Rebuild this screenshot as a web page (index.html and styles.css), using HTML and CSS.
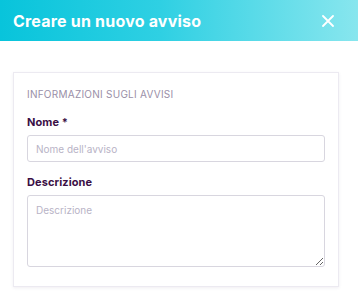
FILE: index.html
```html
<!DOCTYPE html>
<html>
<head>
<meta charset="utf-8">
<link rel="stylesheet" href="styles.css">
</head>
<body>
<div class="modal">
  <header class="modal-header">
    <h1 class="modal-title">Creare un nuovo avviso</h1>
    <button class="close-btn" aria-label="Chiudi">
      <svg width="12" height="12" viewBox="0 0 12 12"><path d="M1 1L11 11M11 1L1 11" stroke="#fff" stroke-width="1.8" stroke-linecap="round"/></svg>
    </button>
  </header>
  <div class="modal-body">
    <section class="card">
      <div class="section-title">INFORMAZIONI SUGLI AVVISI</div>
      <label class="field-label" for="nome">Nome *</label>
      <input id="nome" class="input" type="text" placeholder="Nome dell'avviso">
      <label class="field-label desc-label" for="desc">Descrizione</label>
      <textarea id="desc" class="textarea" placeholder="Descrizione"></textarea>
    </section>
  </div>
</div>
</body>
</html>
```
FILE: styles.css
```css
* { box-sizing: border-box; }
html, body { margin: 0; padding: 0; background: #fff; }
body { font-family: Inter, "Noto Sans", sans-serif; width: 358px; height: 292px; overflow: hidden; }
.modal { display: flex; flex-direction: column; }
.modal-header {
  height: 41px;
  display: flex;
  align-items: center;
  justify-content: space-between;
  padding: 0 24px 0 13px;
  background: linear-gradient(90deg, #08c4db 0%, #2fd0e3 45%, #88e6ee 100%);
}
.modal-title { margin: 0; font-size: 16px; font-weight: 700; color: #fff; letter-spacing: 0.2px; }
.close-btn { border: 0; background: none; padding: 0; width: 12px; height: 12px; display: flex; cursor: pointer; }
.modal-body { padding: 31px 19px 0 13px; }
.card {
  border: 1px solid #eceaf1;
  box-shadow: 0 1px 3px rgba(60, 40, 90, 0.08);
  padding: 15px 13px 18px 13px;
  display: flex;
  flex-direction: column;
  height: 215px;
}
.section-title { font-size: 10px; color: #9a8fa8; letter-spacing: 0.25px; line-height: 12px; }
.field-label { font-size: 11px; font-weight: 700; color: #3b0f45; margin-top: 15px; line-height: 14px; letter-spacing: 0.1px; }
.desc-label { margin-top: 13px; }
.input, .textarea {
  margin-top: 6px;
  border: 1px solid #d8d6df;
  border-radius: 3px;
  font-family: inherit;
  font-size: 10px;
  color: #333;
  padding: 0 8px;
  outline: none;
  width: 100%;
}
.input { height: 27px; }
.textarea { height: 72px; padding-top: 8px; resize: vertical; }
.input::placeholder, .textarea::placeholder { color: #b8b3c6; }
```
